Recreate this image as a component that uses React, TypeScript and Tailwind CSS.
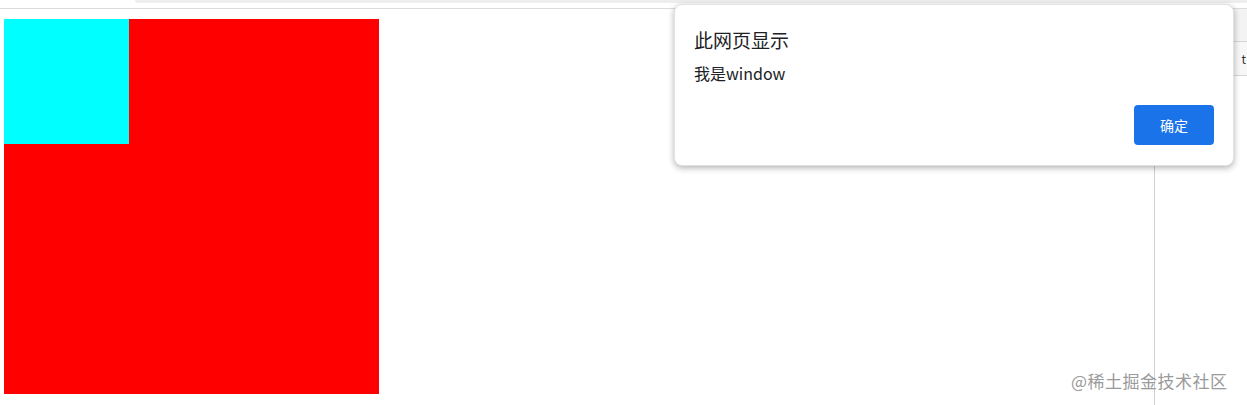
import React from "react";

export default function App() {
  const cjk = { fontFamily: "'Noto Sans CJK SC', 'Noto Sans', sans-serif" };
  return (
    <div className="relative w-[1247px] h-[405px] bg-white overflow-hidden" style={cjk}>
      {/* browser top strip */}
      <div className="h-[9px] border-b border-[#dcdcdc] flex">
        <div className="w-[135px]" />
        <div className="flex-1 h-[3px] bg-[#eeeeee] rounded-bl-[6px]" />
      </div>
      <div className="flex h-[396px]">
        {/* page */}
        <div className="w-[1154px] pt-[10px] pl-[4px]">
          <div className="w-[375px] h-[375px] bg-[#ff0000]">
            <div className="w-[125px] h-[125px] bg-[#00ffff]" />
          </div>
        </div>
        {/* devtools */}
        <div className="flex-1 border-l border-[#d0d0d0] flex flex-col">
          <div className="h-[33px] bg-[#f3f3f3] border-b border-[#d6d6d6]" />
          <div className="h-[34px] bg-[#f7f7f7] border-b border-[#d6d6d6] flex items-center justify-end pr-[1px] text-[12px] leading-[14px] text-[#333]">
            <span>t</span>
          </div>
        </div>
      </div>

      {/* alert dialog */}
      <div className="absolute left-[674px] top-[4px] w-[560px] h-[162px] bg-white rounded-[8px] shadow-[0_2px_6px_rgba(0,0,0,0.3)] border border-[#e2e2e2]">
        <div className="pl-[19px] pt-[24px] text-[19px] leading-[22px] text-[#202124]">此网页显示</div>
        <div className="pl-[19px] pt-[12px] text-[16px] leading-[20px] text-[#202124]">我是window</div>
        <div className="flex justify-end pr-[19px] pt-[22px]">
          <button className="w-[80px] h-[40px] bg-[#1a73e8] rounded-[4px] text-white text-[14px]">确定</button>
        </div>
      </div>

      {/* watermark */}
      <div className="absolute left-[1071px] top-[369px] text-[17px] leading-[24px] text-[#9a9a9a] tracking-[0.5px]">@稀土掘金技术社区</div>
    </div>
  );
}
